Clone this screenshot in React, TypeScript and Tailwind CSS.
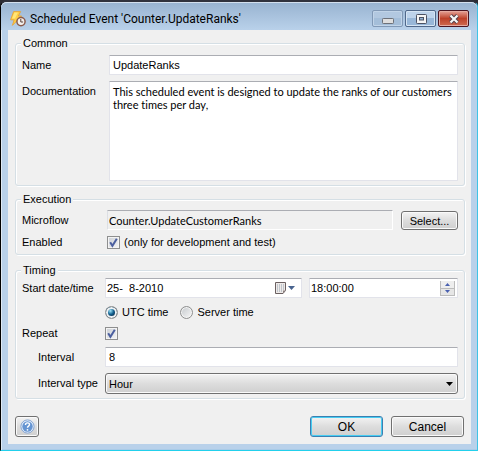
import type { ButtonHTMLAttributes, InputHTMLAttributes, ReactNode } from "react";

const fieldClass =
  "h-5 w-full min-w-0 rounded-[1px] border border-[#e2e3ea] border-t-[#abadb3] bg-white px-[3px] text-[11px] leading-[13px] text-black outline-none";

const buttonClass =
  "rounded-[3px] border border-[#707070] bg-linear-to-b from-[#f3f3f3] from-0% via-[#dddddd] via-50% to-[#cfcfcf] text-center leading-[14px] shadow-[inset_0_0_0_1px_#fafafa]";

function Group({ title, children, className }: { title: string; children: ReactNode; className: string }) {
  return (
    <fieldset
      className={`min-w-0 rounded-[3px] border border-[#d5dfe5] pr-[6px] pl-[5px] shadow-[inset_1px_1px_0_#fff,1px_1px_0_#fff] ${className}`}
    >
      <legend className="bg-[#f0f0f0] px-[2px] leading-[13px]">{title}</legend>
      {children}
    </fieldset>
  );
}

function Tick(props: InputHTMLAttributes<HTMLInputElement>) {
  return (
    <span className="grid size-[13px] shrink-0">
      <input
        type="checkbox"
        {...props}
        className="peer col-start-1 row-start-1 size-[13px] appearance-none border border-[#8e8f8f] bg-linear-to-br from-[#cbcfd5] to-[#f6f6f6] shadow-[inset_0_0_0_1px_#f4f4f4]"
      />
      <svg
        viewBox="0 0 13 13"
        className="pointer-events-none invisible z-10 col-start-1 row-start-1 size-[13px] peer-checked:visible"
      >
        <path d="M3.2 6.3 5.4 9.8 9.8 2.8" fill="none" stroke="#4b5f9f" strokeWidth="2" />
      </svg>
    </span>
  );
}

function Radio({ label, ...props }: { label: string } & InputHTMLAttributes<HTMLInputElement>) {
  return (
    <label className="flex items-center gap-[4px]">
      <input
        type="radio"
        name="zone"
        {...props}
        className="size-[13px] appearance-none rounded-full border border-[#8e8f8f] bg-linear-to-br from-[#c4c8cc] to-[#f8f8f8] shadow-[inset_0_0_0_1px_#f4f4f4] checked:bg-radial-[at_40%_35%] checked:from-[#9fe4f8] checked:from-0% checked:via-[#12608f] checked:via-35% checked:to-[#0b304f] checked:to-60% checked:shadow-[inset_0_0_0_2px_#eef1f3]"
      />
      {label}
    </label>
  );
}

function Caption({ tone, children, ...props }: { tone: string; children: ReactNode } & ButtonHTMLAttributes<HTMLButtonElement>) {
  return (
    <button
      type="button"
      {...props}
      className={`flex h-[17px] w-[31px] items-center justify-center rounded-[2px] border ${tone}`}
    >
      {children}
    </button>
  );
}

function EventIcon() {
  return (
    <svg viewBox="0 0 16 16" className="size-4 shrink-0">
      <path d="M3.600 .6h7L8.400 5h3.200L2.400 14.400 4.200 8.800H.6z" fill="#ffcf45" stroke="#e89f2c" strokeWidth=".8" />
      <path d="M4.400 1.500h3.600L5 7.500H2z" fill="#ffe67a" />
      <circle cx="11" cy="10.600" r="4.100" fill="#f4f1ef" stroke="#8b5c4c" strokeWidth="1.500" />
      <path d="M10.800 8v3h2.300" fill="none" stroke="#57413a" strokeWidth="1" />
    </svg>
  );
}

export default function App() {
  return (
    <div className="bg-[#2b2b33] font-['Liberation_Sans',Arial,sans-serif] text-[11px] leading-[13px] text-black">
      <form
        onSubmit={(e) => e.preventDefault()}
        className="rounded-t-[7px] border border-t-2 border-t-[#30323d] border-r-[#3fc3e6] border-b-[#22d0ec] border-l-black bg-[#b9d1ea] shadow-[inset_1px_0_0_#dfeaf5,inset_0_-1px_0_#a9cbe8]"
      >
        <header className="flex h-7 items-start rounded-t-[6px] border-t border-[#d3e0ee] bg-linear-to-b from-[#99b4d1] to-[#b9d1ea] pr-[8px] pl-[9px]">
          <div className="flex h-[31px] min-w-0 flex-1 items-center gap-[4px]">
            <EventIcon />
            <h1 className="truncate font-['Roboto','Noto_Sans',sans-serif] text-[12px] leading-4">
              Scheduled Event 'Counter.UpdateRanks'
            </h1>
          </div>
          <div className="flex gap-[2px] pt-[7px]">
            <Caption
              aria-label="Minimize"
              tone="border-[#8199b6] bg-linear-to-b from-[#b2c8e0] from-50% to-[#a4bed9] to-50% shadow-[inset_0_0_0_1px_#c1d4e8]"
            >
              <svg viewBox="0 0 12 6" className="mt-[5px] h-[6px] w-3">
                <rect x=".5" y=".5" width="11" height="5" rx=".8" fill="#dedede" stroke="#6d7179" />
              </svg>
            </Caption>
            <Caption
              aria-label="Maximize"
              tone="border-[#50688a] bg-linear-to-b from-[#bdd3eb] from-50% to-[#98b7d8] to-50% shadow-[inset_0_0_0_1px_#d5e4f3]"
            >
              <svg viewBox="0 0 12 10" className="h-[10px] w-3">
                <rect x="1.5" y=".5" width="10" height="9" rx=".8" fill="#f5f5f5" stroke="#4c5263" />
                <rect x="4.5" y="3.5" width="4" height="2.5" fill="#93b4d5" stroke="#4c5263" />
              </svg>
            </Caption>
            <Caption
              aria-label="Close"
              tone="border-[#4b1420] bg-linear-to-b from-[#e4a298] from-0% via-[#bd4029] via-50% to-[#ce6b51] shadow-[inset_0_0_0_1px_#e5aaa0]"
            >
              <svg viewBox="0 0 12 10" className="h-[10px] w-3">
                <path d="m2.5 1.5 7 7m0-7-7 7" stroke="#51414c" strokeWidth="4" />
                <path d="m2.5 1.5 7 7m0-7-7 7" stroke="#f7f7f7" strokeWidth="2.2" />
              </svg>
            </Caption>
          </div>
        </header>

        <main className="mr-[6px] mb-[6px] ml-[7px] bg-[#f0f0f0] px-[6px] py-[7px] pl-[7px]">
          <Group title="Common" className="pt-[5px] pb-[4px]">
            <div className="grid grid-cols-[87px_1fr] gap-y-[6px] pl-px">
              <label htmlFor="name" className="pt-[4px]">
                Name
              </label>
              <input id="name" defaultValue="UpdateRanks" className={fieldClass} />
              <label htmlFor="doc" className="pt-[4px]">
                Documentation
              </label>
              <textarea
                id="doc"
                defaultValue="This scheduled event is designed to update the ranks of our customers three times per day,"
                className="block h-[100px] w-full resize-none rounded-[1px] border border-[#e2e3ea] border-t-[#abadb3] bg-white px-[3px] py-[3px] font-['Lato','Liberation_Sans',sans-serif] text-[11px] leading-[13px] outline-none [font-variant-ligatures:none]"
              />
            </div>
          </Group>

          <Group title="Execution" className="mt-[7px] pt-[4px] pb-[5px]">
            <div className="grid grid-cols-[85px_1fr] items-center gap-y-[6px] pl-px">
              <label htmlFor="flow">Microflow</label>
              <div className="flex items-end gap-[8px]">
                <input
                  id="flow"
                  readOnly
                  defaultValue="Counter.UpdateCustomerRanks"
                  className="h-5 min-w-0 flex-1 rounded-[1px] border border-white border-t-[#abadb3] border-l-[#dcdfe4] bg-[#f0f0f0] px-px font-['Lato','Liberation_Sans',sans-serif] text-[11px] leading-[13px] outline-none"
                />
                <button type="button" className={`h-[19px] w-[57px] text-[11px] ${buttonClass}`}>
                  Select...
                </button>
              </div>
              <label htmlFor="enabled">Enabled</label>
              <label className="flex items-center gap-[4px]">
                <Tick id="enabled" defaultChecked />
                (only for development and test)
              </label>
            </div>
          </Group>

          <Group title="Timing" className="mt-[9px] pt-px pb-[4px]">
            <div className="grid grid-cols-[83px_1fr] items-center gap-y-[6px] pl-px">
              <label htmlFor="date">Start date/time</label>
              <div className="grid grid-cols-[197fr_149fr] gap-[7px]">
                <div className="flex h-5 min-w-0 items-center rounded-[1px] border border-[#e2e3ea] border-t-[#abadb3] bg-white pr-[5px]">
                  <input
                    id="date"
                    defaultValue="25-  8-2010"
                    className="min-w-0 flex-1 bg-transparent pl-px text-[11px] leading-[13px] outline-none"
                  />
                  <button type="button" aria-label="Open calendar" className="flex items-center">
                    <svg viewBox="0 0 22 14" className="h-[14px] w-[22px]">
                      <path d="M1.500 1.500h10v8l-2.500 3H1.500z" fill="#eeeae8" stroke="#6b6061" />
                      <path d="M11.500 9.500H9v3z" fill="#8a7e7e" />
                      <path d="M3 4h7M3 6h7M3 8h7M3 10h5" stroke="#91a0b0" strokeDasharray="1 1" />
                      <path d="M14 5h7l-3.500 4z" fill="#49648f" />
                    </svg>
                  </button>
                </div>
                <div className="flex h-5 min-w-0 items-center rounded-[1px] border border-[#e2e3ea] border-t-[#abadb3] bg-white pr-[2px]">
                  <input
                    aria-label="Start time"
                    defaultValue="18:00:00"
                    className="min-w-0 flex-1 bg-transparent pl-px text-[11px] leading-[13px] outline-none"
                  />
                  <div className="flex w-[15px] flex-col">
                    <button
                      type="button"
                      aria-label="Later"
                      className="flex h-[7px] items-center justify-center border-x border-[#bcbcbc] bg-[#eeeeee]"
                    >
                      <svg viewBox="0 0 5 3" className="h-[3px] w-[5px]">
                        <path d="M0 3h5L2.500 0z" fill="#4960b0" />
                      </svg>
                    </button>
                    <button
                      type="button"
                      aria-label="Earlier"
                      className="flex h-[8px] items-center justify-center border border-[#bcbcbc] bg-[#e6e6e6]"
                    >
                      <svg viewBox="0 0 5 3" className="h-[3px] w-[5px]">
                        <path d="M0 0h5L2.500 3z" fill="#4960b0" />
                      </svg>
                    </button>
                  </div>
                </div>
              </div>
              <div className="col-start-2 flex h-4 items-center gap-[12px]">
                <Radio label="UTC time" defaultChecked />
                <Radio label="Server time" />
              </div>
              <label htmlFor="repeat">Repeat</label>
              <div className="flex h-[15px] items-center">
                <Tick id="repeat" defaultChecked />
              </div>
              <label htmlFor="interval" className="pl-[16px]">
                Interval
              </label>
              <input id="interval" defaultValue="8" className={fieldClass} />
              <label htmlFor="type" className="pl-[16px] whitespace-nowrap">
                Interval type
              </label>
              <div className="grid items-center">
                <select
                  id="type"
                  defaultValue="Hour"
                  className={`col-start-1 row-start-1 h-[21px] w-full appearance-none pl-[3px] text-left text-[11px] ${buttonClass}`}
                >
                  <option>Hour</option>
                  <option>Day</option>
                </select>
                <svg
                  viewBox="0 0 7 4"
                  className="pointer-events-none z-10 col-start-1 row-start-1 mr-[5px] h-1 w-[7px] justify-self-end"
                >
                  <path d="M0 0h7L3.500 4z" fill="#000" />
                </svg>
              </div>
            </div>
          </Group>

          <footer className="mt-[17px] flex items-center gap-[8px] pr-px">
            <button
              type="button"
              aria-label="Help"
              className={`mr-auto flex h-[21px] w-6 items-center justify-center ${buttonClass}`}
            >
              <svg viewBox="0 0 15 15" className="size-[15px]">
                <circle cx="7.5" cy="7.5" r="6.6" fill="#e5eefa" stroke="#86a6d3" />
                <circle cx="7.5" cy="7.5" r="5.2" fill="#6695d2" />
                <path d="M5.500 6c0-3 4-2.600 4-.4 0 1.500-2 1.500-2 3.200" fill="none" stroke="#fff" strokeWidth="1.400" />
                <circle cx="7.500" cy="10.800" r=".9" fill="#fff" />
              </svg>
            </button>
            <button
              type="submit"
              className="h-[21px] w-[73px] rounded-[3px] border border-[#3c7fb1] bg-linear-to-b from-[#f3f3f3] from-0% via-[#dddddd] via-50% to-[#cfcfcf] text-[12px] leading-[14px] shadow-[inset_0_0_0_1px_#47cdf2]"
            >
              OK
            </button>
            <button type="button" className={`h-[21px] w-[73px] text-[12px] ${buttonClass}`}>
              Cancel
            </button>
          </footer>
        </main>
      </form>
    </div>
  );
}
